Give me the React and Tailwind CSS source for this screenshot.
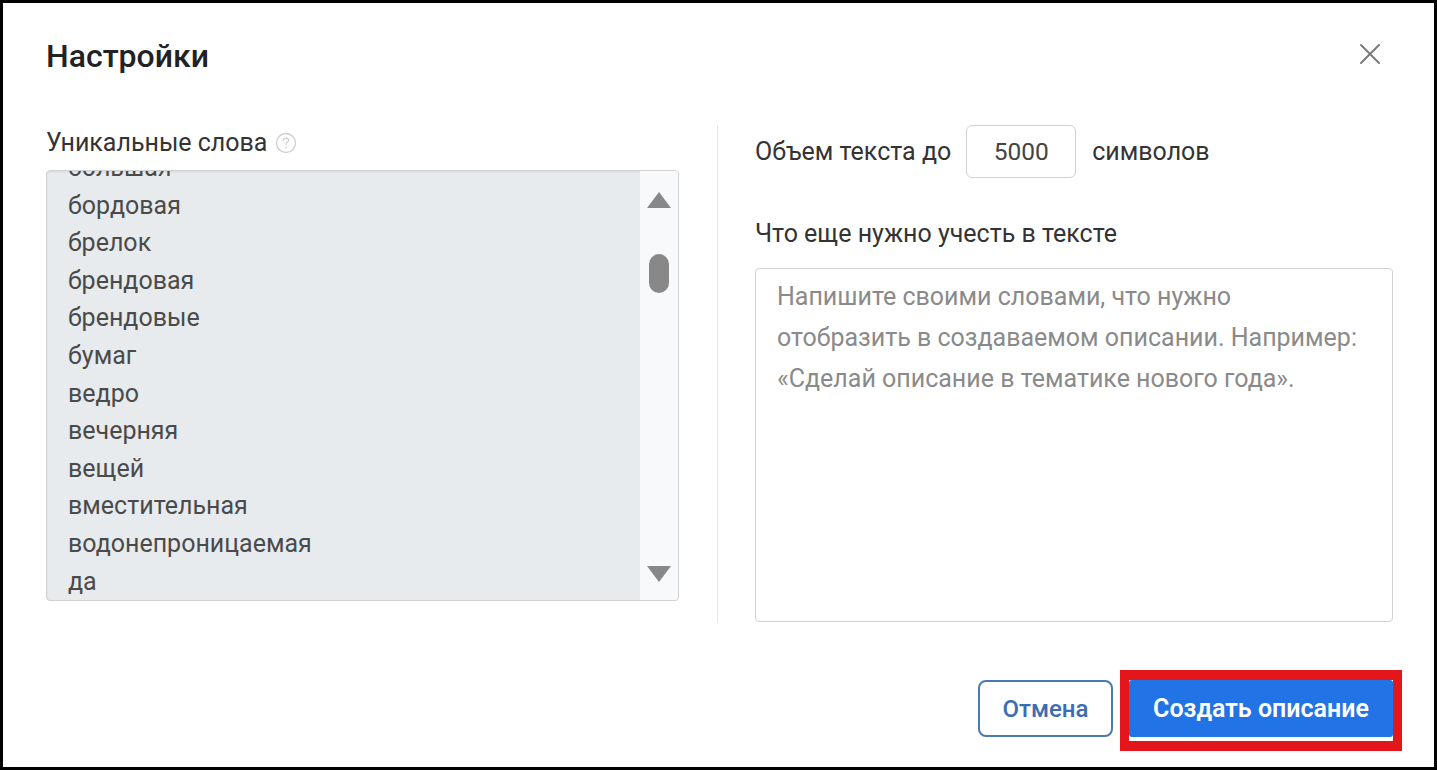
import React from "react";

const words = [
  "большая",
  "бордовая",
  "брелок",
  "брендовая",
  "брендовые",
  "бумаг",
  "ведро",
  "вечерняя",
  "вещей",
  "вместительная",
  "водонепроницаемая",
  "да",
  "дамская",
];

function CloseIcon() {
  return (
    <svg width="22" height="22" viewBox="0 0 22 22" fill="none">
      <path d="M2 2L20 20M20 2L2 20" stroke="#7a7a7a" strokeWidth="2" strokeLinecap="round" />
    </svg>
  );
}

function HelpIcon() {
  return (
    <svg width="22" height="22" viewBox="0 0 22 22" fill="none">
      <circle cx="11" cy="11" r="9.5" stroke="#cfcfcf" strokeWidth="1.3" />
      <path
        d="M8.4 8.6C8.4 7.2 9.5 6.2 11 6.2C12.5 6.2 13.6 7.1 13.6 8.4C13.6 10.2 11 10.3 11 12.4"
        stroke="#cfcfcf"
        strokeWidth="1.3"
        strokeLinecap="round"
      />
      <circle cx="11" cy="15.4" r="0.9" fill="#cfcfcf" />
    </svg>
  );
}

export default function App() {
  return (
    <div className="w-[1437px] h-[770px] border-[3px] border-black bg-white font-['Roboto',sans-serif] flex flex-col">
      {/* Header */}
      <div className="flex items-start justify-between pl-[43px] pr-[53px] pt-[35px]">
        <h1 className="text-[32px] font-medium text-[#222] leading-[36px]">Настройки</h1>
        <button className="mt-[5px]" aria-label="Закрыть">
          <CloseIcon />
        </button>
      </div>

      {/* Body */}
      <div className="flex pl-[43px] pr-[41px] mt-[54px]">
        {/* Left column */}
        <div className="w-[633px] flex flex-col">
          <div className="flex items-center gap-[8px] h-[30px]">
            <span className="text-[25px] text-[#333]">Уникальные слова</span>
            <HelpIcon />
          </div>
          <div className="mt-[12px] h-[431px] rounded-[4px] border border-[#d2d2d2] bg-[#e8ebee] flex overflow-hidden shadow-[inset_0_1px_2px_rgba(0,0,0,0.08)]">
            <div className="flex-1 overflow-hidden">
              <ul className="-mt-[22px] pl-[21px]">
                {words.map((w) => (
                  <li key={w} className="h-[37.6px] leading-[37.6px] text-[25px] text-[#4a4a4a]">
                    {w}
                  </li>
                ))}
              </ul>
            </div>
            {/* Scrollbar */}
            <div className="w-[38px] bg-[#f8f9fa] flex flex-col items-center pt-[21px] pb-[18px]">
              <div className="w-0 h-0 border-l-[12px] border-r-[12px] border-b-[16px] border-l-transparent border-r-transparent border-b-[#888]" />
              <div className="mt-[46px] w-[20px] h-[39px] rounded-full bg-[#888]" />
              <div className="flex-1" />
              <div className="w-0 h-0 border-l-[12px] border-r-[12px] border-t-[16px] border-l-transparent border-r-transparent border-t-[#888]" />
            </div>
          </div>
        </div>

        {/* Divider */}
        <div className="ml-[38px] w-px bg-[#e6e6e6] h-[498px] -mt-[3px]" />

        {/* Right column */}
        <div className="ml-[37px] flex-1 flex flex-col -mt-[3px]">
          <div className="flex items-center h-[53px]">
            <span className="text-[25px] text-[#333]">Объем текста до</span>
            <input
              readOnly
              value="5000"
              className="ml-[15px] w-[110px] h-[53px] rounded-[6px] border border-[#d2d2d2] text-center text-[24.5px] text-[#444] outline-none"
            />
            <span className="ml-[16px] text-[25px] text-[#333]">символов</span>
          </div>
          <div className="mt-[41px] text-[25px] text-[#333] leading-[30px]">Что еще нужно учесть в тексте</div>
          <textarea
            readOnly
            placeholder={
              "Напишите своими словами, что нужно\nотобразить в создаваемом описании. Например:\n«Сделай описание в тематике нового года»."
            }
            className="mt-[19px] h-[354px] resize-none rounded-[4px] border border-[#d2d2d2] pl-[21px] pr-[10px] pt-[7px] text-[25px] leading-[41px] text-[#333] placeholder:text-[#8a8a8a] outline-none"
          />
        </div>
      </div>

      {/* Footer */}
      <div className="flex justify-end items-start pr-[32px] mt-[47px]">
        <button className="mt-[10px] w-[135px] h-[57px] rounded-[8px] border-2 border-[#4b79b4] text-[24px] text-[#3b6db3] font-medium">
          Отмена
        </button>
        <div className="ml-[7px] border-[9px] border-t-[10px] border-b-[10px] border-[#e3161c] bg-white">
          <button className="w-[264px] h-[57px] rounded-[3px] bg-[#2274e6] text-white text-[25px] font-semibold mb-[4px] block">
            Создать описание
          </button>
        </div>
      </div>
    </div>
  );
}
